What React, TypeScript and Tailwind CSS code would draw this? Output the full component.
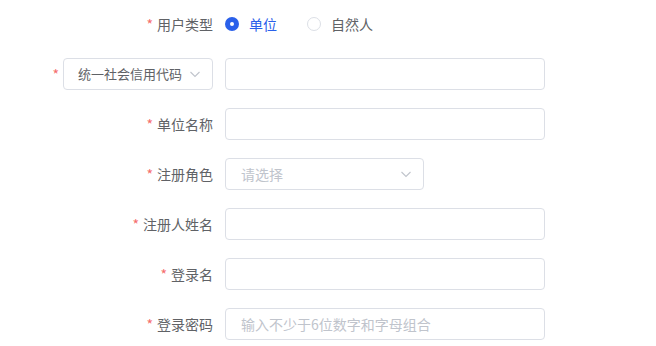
import React, { useState } from "react";

const Chevron = ({ className = "" }: { className?: string }) => (
  <svg width="12" height="12" viewBox="0 0 12 12" className={className}>
    <path d="M1.5 4 L6 8.5 L10.5 4" fill="none" stroke="#c0c4cc" strokeWidth="1.1" />
  </svg>
);

const Star = () => <span className="text-[#f56c6c] mr-[4px]">*</span>;

const Label = ({ text }: { text: string }) => (
  <div className="w-[225px] shrink-0 pr-[12px] flex justify-end items-center text-[14px] text-[#606266]">
    <Star />
    {text}
  </div>
);

const TextInput = ({ placeholder = "" }: { placeholder?: string }) => (
  <input
    placeholder={placeholder}
    className="w-[320px] h-[32px] border border-[#dcdfe6] rounded-[4px] px-[15px] text-[14px] text-[#606266] placeholder:text-[#c0c4cc] outline-none"
  />
);

const App: React.FC = () => {
  const [userType, setUserType] = useState<string>("unit");

  const radio = (value: string, text: string) => {
    const on = userType === value;
    return (
      <button
        className="flex items-center gap-[10px] cursor-pointer"
        onClick={() => setUserType(value)}
      >
        <span
          className={
            on
              ? "w-[14px] h-[14px] rounded-full bg-[#2a60ea] flex items-center justify-center"
              : "w-[14px] h-[14px] rounded-full border border-[#dcdfe6] bg-white"
          }
        >
          {on && <span className="w-[4px] h-[4px] rounded-full bg-white" />}
        </span>
        <span className={on ? "text-[14px] text-[#2a60ea]" : "text-[14px] text-[#606266]"}>{text}</span>
      </button>
    );
  };

  return (
    <div
      className="w-[656px] h-[346px] bg-white pt-[8px] flex flex-col gap-[18px]"
      style={{ fontFamily: '"Noto Sans CJK SC", "Noto Sans", sans-serif' }}
    >
      {/* 用户类型 */}
      <div className="flex h-[32px] items-center">
        <Label text="用户类型" />
        <div className="flex items-center gap-[30px]">
          {radio("unit", "单位")}
          {radio("person", "自然人")}
        </div>
      </div>

      {/* 证件类型 */}
      <div className="flex h-[32px] items-center">
        <div className="w-[225px] shrink-0 pr-[12px] flex justify-end items-center text-[14px]">
          <Star />
          <div className="w-[150px] h-[32px] border border-[#dcdfe6] rounded-[4px] pl-[14px] pr-[11px] flex items-center justify-between text-[13px] text-[#606266] whitespace-nowrap">
            <span>统一社会信用代码</span>
            <Chevron />
          </div>
        </div>
        <TextInput />
      </div>

      <div className="flex h-[32px] items-center">
        <Label text="单位名称" />
        <TextInput />
      </div>

      <div className="flex h-[32px] items-center">
        <Label text="注册角色" />
        <div className="w-[199px] h-[32px] border border-[#dcdfe6] rounded-[4px] pl-[15px] pr-[11px] flex items-center justify-between text-[14px] text-[#c0c4cc]">
          <span>请选择</span>
          <Chevron />
        </div>
      </div>

      <div className="flex h-[32px] items-center">
        <Label text="注册人姓名" />
        <TextInput />
      </div>

      <div className="flex h-[32px] items-center">
        <Label text="登录名" />
        <TextInput />
      </div>

      <div className="flex h-[32px] items-center">
        <Label text="登录密码" />
        <TextInput placeholder="输入不少于6位数字和字母组合" />
      </div>
    </div>
  );
};

export default App;
